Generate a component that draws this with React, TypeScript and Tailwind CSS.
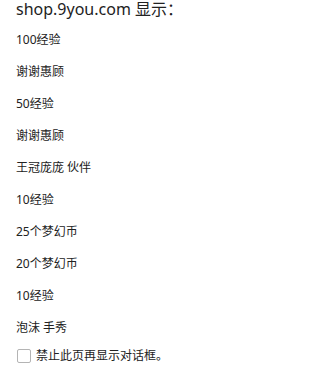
export default function App() {
  const items = [
    "100经验",
    "谢谢惠顾",
    "50经验",
    "谢谢惠顾",
    "王冠庞庞 伙伴",
    "10经验",
    "25个梦幻币",
    "20个梦幻币",
    "10经验",
    "泡沫 手秀",
  ];

  return (
    <div
      className="w-[294px] h-[374px] bg-white text-[#222] overflow-hidden"
      style={{ fontFamily: '"Noto Sans", "Noto Sans CJK SC", sans-serif' }}
    >
      <div className="pl-4">
        <div className="text-[16px] leading-[18px] h-[18px]">shop.9you.com 显示：</div>
        <div className="mt-[6px]">
          {items.map((t, i) => (
            <div key={i} className="h-8 flex items-center text-[12px]">
              {t}
            </div>
          ))}
        </div>
        <label className="flex items-center h-[23px] gap-[5px] text-[12px]">
          <span className="w-[14px] h-[14px] ml-px border border-[#b4b4b4] rounded-[2px] bg-white" />
          <span>禁止此页再显示对话框。</span>
        </label>
      </div>
    </div>
  );
}
